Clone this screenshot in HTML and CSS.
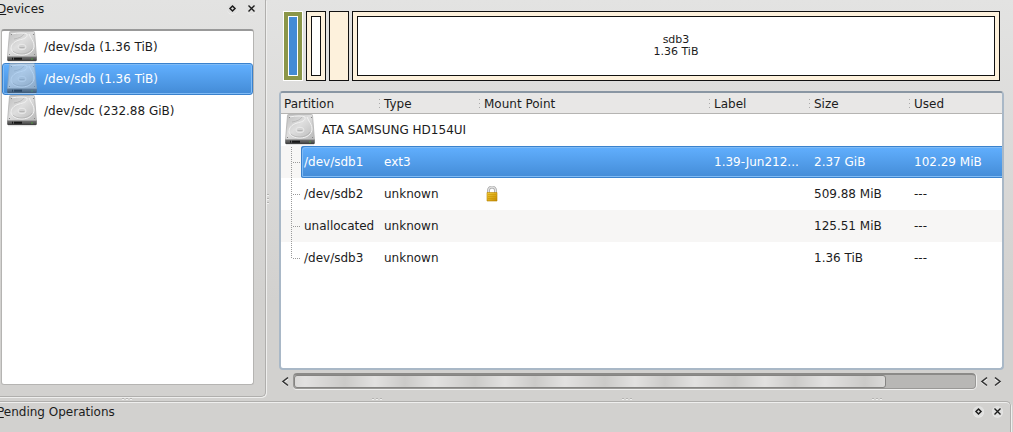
FILE: index.html
```html
<!DOCTYPE html>
<html lang="en">
<head>
  <meta charset="UTF-8" />
  <meta name="viewport" content="width=device-width, initial-scale=1.0"/>
  <title>Partition Manager</title>
  <link rel="stylesheet" href="styles.css">
</head>
<body>
  <!-- Shared icons -->
  <svg class="defs" width="0" height="0">
    <defs>
      <linearGradient id="metal" x1="0" y1="0" x2="1" y2="1">
        <stop offset="0" stop-color="#bdbdbd"/>
        <stop offset=".45" stop-color="#dedede"/>
        <stop offset="1" stop-color="#b8b8b8"/>
      </linearGradient>
      <linearGradient id="front" x1="0" y1="0" x2="0" y2="1">
        <stop offset="0" stop-color="#777"/>
        <stop offset="1" stop-color="#3c3c3c"/>
      </linearGradient>
      <linearGradient id="gold" x1="0" y1="0" x2="1" y2="1">
        <stop offset="0" stop-color="#f3cf3c"/>
        <stop offset="1" stop-color="#c48a00"/>
      </linearGradient>
      <symbol id="drive" viewBox="0 0 32 32">
        <path d="M3.500 1.500q0-1 1-1h23q1 0 1 1L30.500 26h-29z" fill="url(#metal)" stroke="#b0b0b0" stroke-width=".8"/>
        <path d="M1.200 25.500h29.600V29q0 1-1 1H2.200q-1 0-1-1z" fill="url(#front)"/>
        <path d="M1.500 25.500h29" stroke="#a2a2a2" stroke-width=".8"/>
        <path d="M6 27.800h1M8 27.800h8" stroke="#161616" stroke-width="2"/>
        <path d="M25 28h2" stroke="#4f9a3d"/>
        <path d="M2 30.700h28" stroke="#cfcfcf" stroke-width=".8"/>
        <path d="M5 3q12-2 16 0c1 4-4 5-8 6-6 2-8 5-8 9 1 4 6 6 11 6 7 0 12-4 12-9 0-4-2-6-3-8l-2-4" fill="none" stroke="#f2f2f2" stroke-width="1"/>
        <path d="M8 8c5-1 8-2 10-5M7 20c2 2 5 3 9 3s8-2 10-5" fill="none" stroke="#a9a9a9" stroke-width=".6"/>
        <ellipse cx="16" cy="16" rx="4" ry="2.700" fill="#d2d2d2" stroke="#efefef" stroke-width=".8"/>
        <path d="M13.500 16.500h5" stroke="#b5b5b5"/>
        <path d="M5 3.500h1M27 3.500h1M3 23.500h1M28 23.500h1" stroke="#888"/>
      </symbol>
      <symbol id="lock" viewBox="0 0 16 16">
        <path d="M4.500 8V4.500a3.500 3.500 0 0 1 7 0V8" fill="none" stroke="#a5a5a5" stroke-width="2.800"/>
        <path d="M4.500 8V4.500a3.500 3.500 0 0 1 7 0V8" fill="none" stroke="#e2e2e2" stroke-width="1.300"/>
        <path d="M3 6.500h10v8.500H3z" fill="url(#gold)" stroke="#b98500" stroke-width=".6"/>
        <path d="M4 8.500h8M4 10.500h8M4 12.500h8" stroke="#cd9600" stroke-width=".6"/>
      </symbol>
      <symbol id="float" viewBox="0 0 13 13">
        <circle cx="6.500" cy="7" r="5.500" fill="#f3f3f2"/>
        <circle cx="6.500" cy="6.500" r="5.500" fill="#e0e0df"/>
        <path d="M6.500 4L9 6.500 6.500 9 4 6.500z" fill="none" stroke="#1c1c1c" stroke-width="1.500"/>
      </symbol>
      <symbol id="close" viewBox="0 0 13 13">
        <circle cx="6.500" cy="7" r="5.500" fill="#f3f3f2"/>
        <circle cx="6.500" cy="6.500" r="5.500" fill="#e0e0df"/>
        <path d="M3.500 3.500l6 6M9.500 3.500l-6 6" stroke="#1c1c1c" stroke-width="1.400"/>
      </symbol>
      <symbol id="left" viewBox="0 0 13 13">
        <path d="M9 4L4 7.500 9 11" fill="none" stroke="#f3f3f3" stroke-width="1.500"/>
        <path d="M9 2.500L4 6.500l5 4" fill="none" stroke="#333" stroke-width="1.600"/>
      </symbol>
      <symbol id="right" viewBox="0 0 13 13">
        <path d="M4 4l5 3.500L4 11" fill="none" stroke="#f3f3f3" stroke-width="1.500"/>
        <path d="M4 2.500l5 4-5 4" fill="none" stroke="#333" stroke-width="1.600"/>
      </symbol>
      <symbol id="branch" viewBox="0 0 20 32">
        <path d="M10.500 1v31M12 16.500h8" stroke="#9a9a9a" stroke-dasharray="1 1"/>
      </symbol>
      <symbol id="branch-end" viewBox="0 0 20 32">
        <path d="M10.500 1v16M12 16.500h8" stroke="#9a9a9a" stroke-dasharray="1 1"/>
      </symbol>
    </defs>
  </svg>

  <div class="workspace">
    <section class="dock devices">
      <header class="dock-title">
        <h2><u>D</u>evices</h2>
        <button aria-label="Float devices"><svg><use href="#float"/></svg></button>
        <button aria-label="Close devices"><svg><use href="#close"/></svg></button>
      </header>
      <ul class="device-list">
        <li><svg><use href="#drive"/></svg>/dev/sda (1.36 TiB)</li>
        <li class="selected"><svg><use href="#drive"/></svg>/dev/sdb (1.36 TiB)</li>
        <li><svg><use href="#drive"/></svg>/dev/sdc (232.88 GiB)</li>
      </ul>
    </section>

    <div class="splitter-v"><i></i><i></i><i></i></div>

    <main class="partitions">
      <div class="disk-bar">
        <div class="part active"><div class="usage"></div></div>
        <div class="part"><div class="usage"></div></div>
        <div class="part"></div>
        <div class="part large"><div class="usage">sdb3<br>1.36 TiB</div></div>
      </div>

      <div class="table-view">
        <table>
          <colgroup>
            <col class="col"><col class="col"><col class="col-mount"><col class="col"><col class="col"><col>
          </colgroup>
          <thead>
            <tr><th>Partition</th><th>Type</th><th>Mount Point</th><th>Label</th><th>Size</th><th>Used</th></tr>
          </thead>
          <tbody>
            <tr>
              <td colspan="6"><div class="disk"><svg><use href="#drive"/></svg>ATA SAMSUNG HD154UI</div></td>
            </tr>
            <tr class="alt selected">
              <td><div class="node"><svg><use href="#branch"/></svg><span>/dev/sdb1</span></div></td>
              <td>ext3</td><td></td><td>1.39-Jun212...</td><td>2.37 GiB</td><td>102.29 MiB</td>
            </tr>
            <tr>
              <td><div class="node"><svg><use href="#branch"/></svg><span>/dev/sdb2</span></div></td>
              <td>unknown</td><td><svg class="lock"><use href="#lock"/></svg></td><td></td><td>509.88 MiB</td><td>---</td>
            </tr>
            <tr class="alt">
              <td><div class="node"><svg><use href="#branch"/></svg><span>unallocated</span></div></td>
              <td>unknown</td><td></td><td></td><td>125.51 MiB</td><td>---</td>
            </tr>
            <tr>
              <td><div class="node"><svg><use href="#branch-end"/></svg><span>/dev/sdb3</span></div></td>
              <td>unknown</td><td></td><td></td><td>1.36 TiB</td><td>---</td>
            </tr>
          </tbody>
        </table>
      </div>

      <div class="scrollbar">
        <button aria-label="Scroll left"><svg><use href="#left"/></svg></button>
        <div class="track"><div class="handle"></div></div>
        <button aria-label="Scroll left"><svg><use href="#left"/></svg></button>
        <button aria-label="Scroll right"><svg><use href="#right"/></svg></button>
      </div>
    </main>
  </div>

  <div class="splitter-h">
    <span><i></i><i></i><i></i></span>
    <span><i></i><i></i><i></i></span>
    <span><i></i><i></i><i></i></span>
    <span><i></i><i></i><i></i></span>
  </div>

  <section class="dock pending">
    <header class="dock-title">
      <h2><u>P</u>ending Operations</h2>
      <button aria-label="Float pending operations"><svg><use href="#float"/></svg></button>
      <button aria-label="Close pending operations"><svg><use href="#close"/></svg></button>
    </header>
  </section>
</body>
</html>
```
FILE: styles.css
```css
* {
  box-sizing: border-box;
}

body {
  margin: 0;
  height: 100vh;
  display: flex;
  flex-direction: column;
  overflow: hidden;
  font-family: "DejaVu Sans", sans-serif;
  font-size: 12px;
  line-height: 16px;
  color: #1c1c1c;
  background: linear-gradient(#e3e3e2, #d2d1cf 300px);
}

.defs {
  position: absolute;
}

button {
  padding: 0;
  border: none;
  background: none;
  width: 13px;
  height: 13px;
}

button svg {
  display: block;
  width: 13px;
  height: 13px;
}

.workspace {
  flex: 1;
  min-height: 0;
  display: flex;
}

/* Dock panels */
.dock {
  margin-left: -8px;
  border: 1px solid #b0afad;
  box-shadow: 1px 1px 0 #efefee, inset 0 1px 0 #efefee;
}

.devices {
  width: 274px;
  display: flex;
  flex-direction: column;
  border-top: none;
  border-radius: 0 0 5px 5px;
  box-shadow: 1px 1px 0 #efefee;
  padding: 0 11px 11px 8px;
}

.pending {
  height: 31px;
  margin-right: 2px;
  padding: 1px 6px 0 4px;
  border-bottom: none;
  border-radius: 5px 5px 0 0;
}

.dock-title {
  display: flex;
  align-items: center;
  gap: 6px;
  height: 17px;
}

.devices .dock-title {
  margin: 0 -4px 12px;
}

.dock-title h2 {
  flex: 1;
  margin: 0;
  font-size: 12px;
  font-weight: normal;
}

.device-list {
  flex: 1;
  margin: 0;
  padding: 0;
  list-style: none;
  background: #fff;
  border: 1px solid #b5b4b2;
  border-top: 2px solid #999;
  border-radius: 3px;
}

.device-list li {
  display: flex;
  align-items: center;
  gap: 6px;
  height: 32px;
  padding: 0 3px;
  border: 1px solid transparent;
  border-radius: 3px;
}

.device-list svg {
  width: 32px;
  height: 32px;
}

.device-list .selected {
  color: #fff;
  background: linear-gradient(#62b0ff, #438bd6);
  border-color: #3a82cd;
  box-shadow: inset 0 0 0 1px #80bbf5;
}

.selected svg {
  opacity: .6;
}

/* Splitters */
.splitter-v {
  width: 13px;
  display: flex;
  flex-direction: column;
  justify-content: center;
  gap: 2px;
  padding-left: 1px;
}

.splitter-h {
  height: 4px;
  display: grid;
  grid-template-columns: repeat(4, 250px);
  justify-items: center;
  padding-left: 2px;
}

.splitter-h span {
  display: flex;
  align-items: center;
  gap: 2px;
}

.splitter-v i,
.splitter-h i {
  width: 2px;
  height: 2px;
  background: #f0f0ef;
  border-top: 1px solid #b5b4b2;
}

/* Partition bar */
.partitions {
  flex: 1;
  min-width: 0;
  display: flex;
  flex-direction: column;
  padding: 11px 9px 8px 0;
}

.disk-bar {
  display: flex;
  gap: 3px;
  height: 70px;
  margin: 0 4px 10px;
}

.part {
  width: 20px;
  padding: 4px;
  background: #fdf1dc;
  border: 1px solid #111;
}

.usage {
  height: 100%;
  display: flex;
  align-items: center;
  justify-content: center;
  background: #fff;
  border: 1px solid #111;
  font-size: 11px;
  line-height: 12px;
  text-align: center;
}

.active,
.active .usage {
  border-color: #fff;
}

.active {
  background: #8b9649;
}

.active .usage {
  background: #438bd6;
}

.large {
  flex: 1;
}

/* Partition table */
.table-view {
  flex: 1;
  min-height: 0;
  overflow: hidden;
  background: #fff;
  border: 2px solid #a9b8c7;
  border-top-color: #8996a3;
  border-radius: 4px;
}

table {
  width: 100%;
  table-layout: fixed;
  border-collapse: separate;
  border-spacing: 0;
}

.col {
  width: 100px;
}

.col-mount {
  width: 230px;
}

th,
td {
  padding: 0 0 0 3px;
  font-weight: normal;
  text-align: left;
  white-space: nowrap;
  overflow: hidden;
}

th {
  height: 21px;
  padding-top: 1px;
  background: #e8e7e6;
  border-bottom: 1px solid #b5b4b2;
}

/* three-dot column divider */
th:not(:last-child) {
  background: repeating-linear-gradient(#aaa 0 1px, transparent 1px 4px) right 1px top 6px / 1px 9px no-repeat, #e8e7e6;
}

td {
  height: 32px;
}

td:first-child {
  padding: 0;
}

.alt {
  background: #f7f6f5;
}

.selected td {
  color: #fff;
  background: linear-gradient(#62b0ff, #438bd6);
  box-shadow: inset 0 1px 0 #3a82cd, inset 0 -1px 0 #3a82cd, inset 0 2px 0 #80bbf5, inset 0 -2px 0 #80bbf5;
}

.selected td:first-child {
  background: none;
  box-shadow: none;
}

.disk,
.node {
  display: flex;
  align-items: center;
  height: 32px;
}

.disk {
  gap: 6px;
  padding-left: 3px;
}

.disk svg {
  width: 32px;
  height: 32px;
}

.node svg {
  width: 20px;
  height: 32px;
  opacity: 1;
}

.node span {
  flex: 1;
  line-height: 32px;
  padding-left: 3px;
}

.selected .node span {
  background: linear-gradient(#62b0ff, #438bd6);
  border-radius: 3px 0 0 3px;
  box-shadow: inset 1px 1px 0 #3a82cd, inset 0 -1px 0 #3a82cd, inset 2px 2px 0 #80bbf5, inset 0 -2px 0 #80bbf5;
}

.lock {
  display: block;
  width: 16px;
  height: 16px;
}

/* Scrollbar */
.scrollbar {
  display: flex;
  align-items: center;
  height: 16px;
  margin-top: 3px;
}

.track {
  flex: 1;
  height: 16px;
  margin: 0 2px 0 1px;
  background: #b8b7b5;
  border: 1px solid #999896;
  border-top: 2px solid #8b8a88;
  border-radius: 4px;
  box-shadow: 0 1px 0 #f0f0ef, 1px 0 0 #f0f0ef;
}

.handle {
  width: 87%;
  height: 13px;
  border: 1px solid #858482;
  border-radius: 3px;
  background: repeating-linear-gradient(90deg, #e2e1e0 10px, #cbcac8 50px, #e2e1e0 80px, #cbcac8 110px, #e2e1e0 140px);
}
```
